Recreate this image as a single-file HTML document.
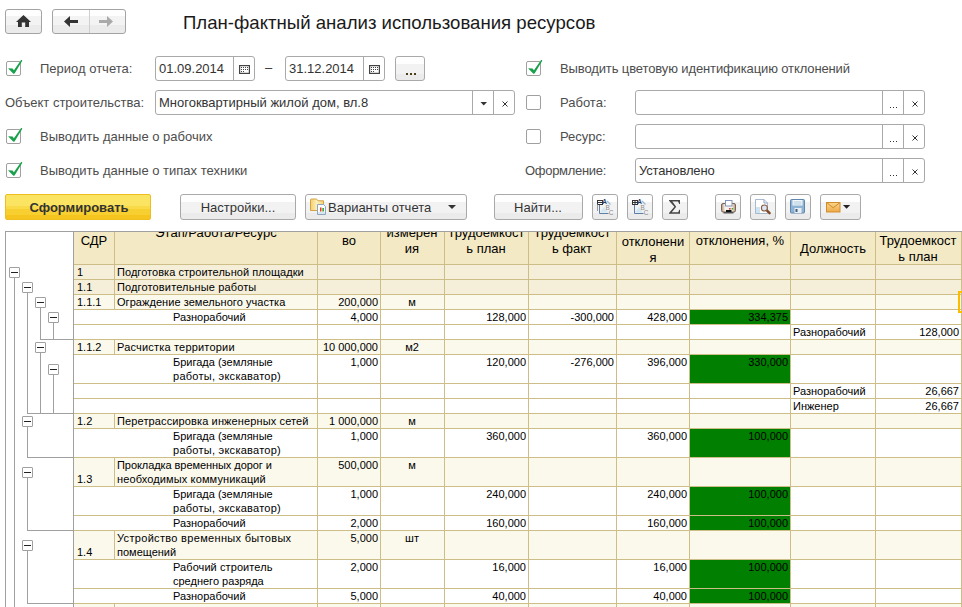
<!DOCTYPE html>
<html><head><meta charset="utf-8"><style>
html,body{margin:0;padding:0;}
body{width:962px;height:607px;overflow:hidden;position:relative;background:#fff;font-family:"Liberation Sans", sans-serif;}
.t{position:absolute;white-space:nowrap;font-family:"Liberation Sans", sans-serif;}
</style></head><body>
<div style="position:absolute;left:5px;top:9px;width:35px;height:23px;border:1px solid #a3a3a3;border-radius:3px;background:linear-gradient(#fefefe 0,#fefefe 27%,#f3f3f3 27%,#f3f3f3 64%,#ebebeb 64%,#ebebeb 100%);"></div><svg style="position:absolute;left:0;top:0" width="962" height="40"><path d="M23.5 15 L31 22 L29 22 L29 27 L25.2 27 L25.2 22.5 L21.8 22.5 L21.8 27 L18 27 L18 22 L16 22 Z" fill="#333"/></svg><div style="position:absolute;left:52px;top:9px;width:72px;height:23px;border:1px solid #a3a3a3;border-radius:3px;background:linear-gradient(#fefefe 0,#fefefe 27%,#f3f3f3 27%,#f3f3f3 64%,#ebebeb 64%,#ebebeb 100%);"></div><div style="position:absolute;left:89px;top:10px;width:1px;height:23px;background:#cfcfcf;"></div><svg style="position:absolute;left:0;top:0" width="962" height="40"><path d="M64 21.5 L70 16 L70 20 L78 20 L78 23 L70 23 L70 27 Z" fill="#333"/><path d="M113 21.5 L107 16 L107 20 L99 20 L99 23 L107 23 L107 27 Z" fill="#aaa"/></svg><div class="t" style="left:183px;top:14.26px;font-size:18.6px;line-height:18.6px;color:#1a1a1a;font-weight:normal;">План-фактный анализ использования ресурсов</div><div style="position:absolute;left:6px;top:61px;width:13px;height:13px;border:1px solid #a0a0a0;border-radius:2px;background:#fff;"></div><svg style="position:absolute;left:7px;top:59px" width="18" height="18"><path d="M1.3 9.2 L5.6 9.4 L6.9 11.2 L14.1 1.0 L14.8 0.9 L15.3 1.7 L7.6 14.5 L6.4 14.8 L1.7 10.1 Z" fill="#19a04b"/></svg><div class="t" style="left:40px;top:62.0px;font-size:13px;line-height:13px;color:#4d4d4d;font-weight:normal;">Период отчета:</div><div style="position:absolute;left:526px;top:61px;width:13px;height:13px;border:1px solid #a0a0a0;border-radius:2px;background:#fff;"></div><svg style="position:absolute;left:527px;top:59px" width="18" height="18"><path d="M1.3 9.2 L5.6 9.4 L6.9 11.2 L14.1 1.0 L14.8 0.9 L15.3 1.7 L7.6 14.5 L6.4 14.8 L1.7 10.1 Z" fill="#19a04b"/></svg><div class="t" style="left:560px;top:62.0px;font-size:13px;line-height:13px;color:#4d4d4d;font-weight:normal;letter-spacing:-0.12px;">Выводить цветовую идентификацию отклонений</div><div class="t" style="left:5px;top:96.0px;font-size:13px;line-height:13px;color:#4d4d4d;font-weight:normal;">Объект строительства:</div><div style="position:absolute;left:526px;top:95px;width:13px;height:13px;border:1px solid #a0a0a0;border-radius:2px;background:#fff;"></div><div class="t" style="left:560px;top:96.0px;font-size:13px;line-height:13px;color:#4d4d4d;font-weight:normal;">Работа:</div><div style="position:absolute;left:6px;top:129px;width:13px;height:13px;border:1px solid #a0a0a0;border-radius:2px;background:#fff;"></div><svg style="position:absolute;left:7px;top:127px" width="18" height="18"><path d="M1.3 9.2 L5.6 9.4 L6.9 11.2 L14.1 1.0 L14.8 0.9 L15.3 1.7 L7.6 14.5 L6.4 14.8 L1.7 10.1 Z" fill="#19a04b"/></svg><div class="t" style="left:40px;top:130.0px;font-size:13px;line-height:13px;color:#4d4d4d;font-weight:normal;">Выводить данные о рабочих</div><div style="position:absolute;left:526px;top:129px;width:13px;height:13px;border:1px solid #a0a0a0;border-radius:2px;background:#fff;"></div><div class="t" style="left:560px;top:130.0px;font-size:13px;line-height:13px;color:#4d4d4d;font-weight:normal;">Ресурс:</div><div style="position:absolute;left:6px;top:163px;width:13px;height:13px;border:1px solid #a0a0a0;border-radius:2px;background:#fff;"></div><svg style="position:absolute;left:7px;top:161px" width="18" height="18"><path d="M1.3 9.2 L5.6 9.4 L6.9 11.2 L14.1 1.0 L14.8 0.9 L15.3 1.7 L7.6 14.5 L6.4 14.8 L1.7 10.1 Z" fill="#19a04b"/></svg><div class="t" style="left:40px;top:164.0px;font-size:13px;line-height:13px;color:#4d4d4d;font-weight:normal;">Выводить данные о типах техники</div><div class="t" style="left:525px;top:164.0px;font-size:13px;line-height:13px;color:#4d4d4d;font-weight:normal;letter-spacing:-0.3px;">Оформление:</div><div style="position:absolute;left:155px;top:56px;width:100px;height:25px;border:1px solid #a9a9a9;border-radius:3px;background:#fff;box-sizing:border-box;"></div><div style="position:absolute;left:233px;top:57px;width:1px;height:23px;background:#a9a9a9;"></div><svg style="position:absolute;left:239px;top:65px" width="12" height="10"><rect x="0.6" y="0.6" width="9.8" height="7.8" fill="#fff" stroke="#444" stroke-width="1.2"/><rect x="2" y="2" width="1" height="1" fill="#444"/><rect x="2" y="4" width="1" height="1" fill="#444"/><rect x="2" y="6" width="1" height="1" fill="#444"/><rect x="4" y="2" width="1" height="1" fill="#444"/><rect x="4" y="4" width="1" height="1" fill="#444"/><rect x="4" y="6" width="1" height="1" fill="#444"/><rect x="6" y="2" width="1" height="1" fill="#444"/><rect x="6" y="4" width="1" height="1" fill="#444"/><rect x="8" y="2" width="1" height="1" fill="#444"/><rect x="8" y="4" width="1" height="1" fill="#444"/></svg><div class="t" style="left:159px;top:62.0px;font-size:13px;line-height:13px;color:#333;font-weight:normal;">01.09.2014</div><div class="t" style="left:265px;top:61.0px;font-size:13px;line-height:13px;color:#333;font-weight:normal;">–</div><div style="position:absolute;left:285px;top:56px;width:100px;height:25px;border:1px solid #a9a9a9;border-radius:3px;background:#fff;box-sizing:border-box;"></div><div style="position:absolute;left:363px;top:57px;width:1px;height:23px;background:#a9a9a9;"></div><svg style="position:absolute;left:369px;top:65px" width="12" height="10"><rect x="0.6" y="0.6" width="9.8" height="7.8" fill="#fff" stroke="#444" stroke-width="1.2"/><rect x="2" y="2" width="1" height="1" fill="#444"/><rect x="2" y="4" width="1" height="1" fill="#444"/><rect x="2" y="6" width="1" height="1" fill="#444"/><rect x="4" y="2" width="1" height="1" fill="#444"/><rect x="4" y="4" width="1" height="1" fill="#444"/><rect x="4" y="6" width="1" height="1" fill="#444"/><rect x="6" y="2" width="1" height="1" fill="#444"/><rect x="6" y="4" width="1" height="1" fill="#444"/><rect x="8" y="2" width="1" height="1" fill="#444"/><rect x="8" y="4" width="1" height="1" fill="#444"/></svg><div class="t" style="left:289px;top:62.0px;font-size:13px;line-height:13px;color:#333;font-weight:normal;">31.12.2014</div><div style="position:absolute;left:395px;top:56px;width:30px;height:25px;border:1px solid #a9a9a9;border-radius:3px;box-sizing:border-box;background:linear-gradient(#fefefe 0,#fefefe 30%,#f2f2f2 30%,#f2f2f2 75%,#ebebeb 75%,#ebebeb 100%);"></div><div style="position:absolute;left:406px;top:73px;width:2px;height:2px;background:#4a3c14;"></div><div style="position:absolute;left:410px;top:73px;width:2px;height:2px;background:#4a3c14;"></div><div style="position:absolute;left:414px;top:73px;width:2px;height:2px;background:#4a3c14;"></div><div style="position:absolute;left:155px;top:90px;width:360px;height:25px;border:1px solid #a9a9a9;border-radius:3px;background:#fff;box-sizing:border-box;"></div><div style="position:absolute;left:472px;top:91px;width:1px;height:23px;background:#a9a9a9;"></div><div style="position:absolute;left:493px;top:91px;width:1px;height:23px;background:#a9a9a9;"></div><svg style="position:absolute;left:480px;top:102px" width="8" height="4"><path d="M0.5 0 L7 0 L3.75 3.5 Z" fill="#333"/></svg><svg style="position:absolute;left:502px;top:101px" width="6" height="6"><path d="M0.5 0.5 L5.5 5.5 M5.5 0.5 L0.5 5.5" stroke="#333" stroke-width="1"/></svg><div class="t" style="left:159px;top:96.0px;font-size:13px;line-height:13px;color:#333;font-weight:normal;">Многоквартирный жилой дом, вл.8</div><div style="position:absolute;left:635px;top:90px;width:290px;height:25px;border:1px solid #a9a9a9;border-radius:3px;background:#fff;box-sizing:border-box;"></div><div style="position:absolute;left:882px;top:91px;width:1px;height:23px;background:#a9a9a9;"></div><div style="position:absolute;left:903px;top:91px;width:1px;height:23px;background:#a9a9a9;"></div><div style="position:absolute;left:890px;top:107px;width:1px;height:1px;background:#333;"></div><div style="position:absolute;left:893px;top:107px;width:1px;height:1px;background:#333;"></div><div style="position:absolute;left:896px;top:107px;width:1px;height:1px;background:#333;"></div><svg style="position:absolute;left:912px;top:101px" width="6" height="6"><path d="M0.5 0.5 L5.5 5.5 M5.5 0.5 L0.5 5.5" stroke="#333" stroke-width="1"/></svg><div style="position:absolute;left:635px;top:124px;width:290px;height:25px;border:1px solid #a9a9a9;border-radius:3px;background:#fff;box-sizing:border-box;"></div><div style="position:absolute;left:882px;top:125px;width:1px;height:23px;background:#a9a9a9;"></div><div style="position:absolute;left:903px;top:125px;width:1px;height:23px;background:#a9a9a9;"></div><div style="position:absolute;left:890px;top:141px;width:1px;height:1px;background:#333;"></div><div style="position:absolute;left:893px;top:141px;width:1px;height:1px;background:#333;"></div><div style="position:absolute;left:896px;top:141px;width:1px;height:1px;background:#333;"></div><svg style="position:absolute;left:912px;top:135px" width="6" height="6"><path d="M0.5 0.5 L5.5 5.5 M5.5 0.5 L0.5 5.5" stroke="#333" stroke-width="1"/></svg><div style="position:absolute;left:635px;top:158px;width:290px;height:25px;border:1px solid #a9a9a9;border-radius:3px;background:#fff;box-sizing:border-box;"></div><div style="position:absolute;left:882px;top:159px;width:1px;height:23px;background:#a9a9a9;"></div><div style="position:absolute;left:903px;top:159px;width:1px;height:23px;background:#a9a9a9;"></div><div style="position:absolute;left:890px;top:175px;width:1px;height:1px;background:#333;"></div><div style="position:absolute;left:893px;top:175px;width:1px;height:1px;background:#333;"></div><div style="position:absolute;left:896px;top:175px;width:1px;height:1px;background:#333;"></div><svg style="position:absolute;left:912px;top:169px" width="6" height="6"><path d="M0.5 0.5 L5.5 5.5 M5.5 0.5 L0.5 5.5" stroke="#333" stroke-width="1"/></svg><div class="t" style="left:639px;top:164.0px;font-size:13px;line-height:13px;color:#333;font-weight:normal;letter-spacing:-0.15px;">Установлено</div><div style="position:absolute;left:5px;top:194px;width:146px;height:26px;border:1px solid #eebd1e;border-radius:2px;box-sizing:border-box;background:linear-gradient(#fbe462 0,#fbe462 44%,#f9da48 44%,#f9da48 58%,#f8cf30 58%,#f8cf30 84%,#f5c41f 84%,#f5c41f 100%);"></div><div class="t" style="left:-221px;width:600px;text-align:center;top:201.0px;font-size:13px;line-height:13px;color:#333;font-weight:normal;"><b>Сформировать</b></div><div style="position:absolute;left:180px;top:194px;width:116px;height:26px;border:1px solid #a9a9a9;border-radius:3px;box-sizing:border-box;background:linear-gradient(#fefefe 0,#fefefe 30%,#f2f2f2 30%,#f2f2f2 75%,#ebebeb 75%,#ebebeb 100%);"></div><div class="t" style="left:-62px;width:600px;text-align:center;top:201.0px;font-size:13px;line-height:13px;color:#333;font-weight:normal;">Настройки...</div><div style="position:absolute;left:305px;top:194px;width:162px;height:26px;border:1px solid #a9a9a9;border-radius:3px;box-sizing:border-box;background:linear-gradient(#fefefe 0,#fefefe 30%,#f2f2f2 30%,#f2f2f2 75%,#ebebeb 75%,#ebebeb 100%);"></div><div class="t" style="left:328px;top:201.0px;font-size:13px;line-height:13px;color:#333;font-weight:normal;">Варианты отчета</div><svg style="position:absolute;left:448px;top:205px" width="9" height="5"><path d="M0 0 L8 0 L4 4 Z" fill="#333"/></svg><svg style="position:absolute;left:0;top:0" width="962" height="230"><defs><linearGradient id="fg" x1="0" y1="0" x2="1" y2="0"><stop offset="0" stop-color="#f3cf6e"/><stop offset="0.5" stop-color="#fdf0bd"/><stop offset="1" stop-color="#f3d27a"/></linearGradient></defs><path d="M310.5 210.5 L310.5 199.8 Q310.5 199 311.3 199 L316.5 199 L318 200.8 L323.5 200.8 L323.5 210.5 Z" fill="url(#fg)" stroke="#d2a444"/><path d="M317.5 204.5 L323.5 204.5 L325.5 206.5 L325.5 214.5 L317.5 214.5 Z" fill="#fbfcfd" stroke="#8ea6bd"/><rect x="318" y="212" width="7" height="2" fill="#d6e8f4"/><rect x="320" y="207.5" width="1.5" height="4" fill="#ef3b2a"/><rect x="322.3" y="208" width="1.7" height="3.5" fill="#3aae3a"/></svg><div style="position:absolute;left:494px;top:194px;width:89px;height:26px;border:1px solid #a9a9a9;border-radius:3px;box-sizing:border-box;background:linear-gradient(#fefefe 0,#fefefe 30%,#f2f2f2 30%,#f2f2f2 75%,#ebebeb 75%,#ebebeb 100%);"></div><div class="t" style="left:238px;width:600px;text-align:center;top:201.0px;font-size:13px;line-height:13px;color:#333;font-weight:normal;">Найти...</div><div style="position:absolute;left:592px;top:194px;width:26px;height:26px;border:1px solid #a9a9a9;border-radius:3px;box-sizing:border-box;background:linear-gradient(#fefefe 0,#fefefe 30%,#f2f2f2 30%,#f2f2f2 75%,#ebebeb 75%,#ebebeb 100%);"></div><div style="position:absolute;left:627px;top:194px;width:26px;height:26px;border:1px solid #a9a9a9;border-radius:3px;box-sizing:border-box;background:linear-gradient(#fefefe 0,#fefefe 30%,#f2f2f2 30%,#f2f2f2 75%,#ebebeb 75%,#ebebeb 100%);"></div><div style="position:absolute;left:662px;top:194px;width:26px;height:26px;border:1px solid #a9a9a9;border-radius:3px;box-sizing:border-box;background:linear-gradient(#fefefe 0,#fefefe 30%,#f2f2f2 30%,#f2f2f2 75%,#ebebeb 75%,#ebebeb 100%);"></div><svg style="position:absolute;left:0;top:0" width="962" height="230"><path d="M600 212.5 L608 212.5 L604 207 Z" fill="#d3e6f4"/><path d="M599.5 204.5 V213.5 H608.5" fill="none" stroke="#5f80a6"/><path d="M607 201 L610.5 204.5" stroke="#9fb8d0" stroke-width="1.2"/><rect x="597.5" y="200.5" width="5" height="4" fill="#fff" stroke="#333"/><path d="M597.5 202.5 H602.5" stroke="#333"/><path d="M597.5 204.5 V211" stroke="#999"/><text x="602.3" y="204" font-size="6.4" font-weight="bold" font-family="Liberation Sans" fill="#1f4168">A</text><text x="605.6" y="210" font-size="6.4" font-family="Liberation Sans" fill="#8a8a8a">B</text><text x="608.8" y="214.8" font-size="6.4" font-family="Liberation Sans" fill="#8a8a8a">C</text><path d="M635 212.5 L643 212.5 L639 207 Z" fill="#d3e6f4"/><path d="M634.5 204.5 V213.5 H643.5" fill="none" stroke="#5f80a6"/><path d="M642 201 L645.5 204.5" stroke="#9fb8d0" stroke-width="1.2"/><rect x="632.5" y="200.5" width="5" height="4" fill="#fff" stroke="#333"/><path d="M635 200.5 V204.5 M632.5 202.5 H637.5" stroke="#333"/><text x="637.3" y="204" font-size="6.4" font-weight="bold" font-family="Liberation Sans" fill="#1f4168">A</text><text x="640.6" y="210" font-size="6.4" font-family="Liberation Sans" fill="#8a8a8a">B</text><text x="643.8" y="214.8" font-size="6.4" font-family="Liberation Sans" fill="#8a8a8a">C</text><path d="M669 199.9 L680 199.9 L680 204 L679.3 204 L678 201.6 L672.3 201.6 L676.2 206.8 L671.8 212.2 L678.2 212.2 L679.3 209.8 L680 209.8 L680 213.8 L669 213.8 L669 212.9 L674.4 206.8 L669 200.8 Z" fill="#444"/></svg><div style="position:absolute;left:715px;top:194px;width:26px;height:26px;border:1px solid #a9a9a9;border-radius:3px;box-sizing:border-box;background:linear-gradient(#fefefe 0,#fefefe 30%,#f2f2f2 30%,#f2f2f2 75%,#ebebeb 75%,#ebebeb 100%);"></div><div style="position:absolute;left:750px;top:194px;width:26px;height:26px;border:1px solid #a9a9a9;border-radius:3px;box-sizing:border-box;background:linear-gradient(#fefefe 0,#fefefe 30%,#f2f2f2 30%,#f2f2f2 75%,#ebebeb 75%,#ebebeb 100%);"></div><div style="position:absolute;left:785px;top:194px;width:26px;height:26px;border:1px solid #a9a9a9;border-radius:3px;box-sizing:border-box;background:linear-gradient(#fefefe 0,#fefefe 30%,#f2f2f2 30%,#f2f2f2 75%,#ebebeb 75%,#ebebeb 100%);"></div><div style="position:absolute;left:820px;top:194px;width:41px;height:26px;border:1px solid #a9a9a9;border-radius:3px;box-sizing:border-box;background:linear-gradient(#fefefe 0,#fefefe 30%,#f2f2f2 30%,#f2f2f2 75%,#ebebeb 75%,#ebebeb 100%);"></div><svg style="position:absolute;left:0;top:0" width="962" height="230"><defs><linearGradient id="pg" x1="0" y1="0" x2="1" y2="0"><stop offset="0" stop-color="#b88c6c"/><stop offset="0.25" stop-color="#f7f3ee"/><stop offset="0.75" stop-color="#f7f3ee"/><stop offset="1" stop-color="#b88c6c"/></linearGradient><linearGradient id="mg" x1="0" y1="0" x2="0" y2="1"><stop offset="0" stop-color="#f9d68a"/><stop offset="1" stop-color="#eea94a"/></linearGradient></defs><rect x="721.5" y="203.5" width="14" height="8.5" rx="1.5" fill="url(#pg)" stroke="#77675a"/><rect x="725.5" y="200.5" width="6.5" height="5.5" fill="#fff" stroke="#8193b8"/><rect x="729" y="208" width="1.6" height="1.6" fill="#e8322a"/><rect x="731.6" y="208" width="1.6" height="1.6" fill="#3cad3c"/><rect x="726" y="210" width="5.5" height="2" fill="#111"/><rect x="723.5" y="212" width="10" height="1.5" fill="#555"/><path d="M755.5 199.5 L764 199.5 L767.5 203 L767.5 213.5 L755.5 213.5 Z" fill="#fff" stroke="#9fb1c9" stroke-width="0.9"/><path d="M764 199.5 L764 203 L767.5 203" fill="none" stroke="#8fa3c0"/><rect x="756" y="207" width="4" height="6" fill="#cfe4f3"/><path d="M766.6 210.2 L769.6 213.2" stroke="#7a4a2a" stroke-width="2.4" stroke-linecap="round"/><circle cx="764.4" cy="208" r="3" fill="#d8e8f5" stroke="#8b5a3c" stroke-width="1.1"/><rect x="790.5" y="199.5" width="14" height="13.5" rx="1" fill="#8fb3d3" stroke="#5f87ad"/><rect x="792.5" y="200" width="10" height="5.5" fill="#f4f8fb"/><rect x="793.5" y="201.6" width="8" height="0.8" fill="#9bbcd6"/><rect x="793.5" y="203.6" width="8" height="0.8" fill="#9bbcd6"/><rect x="794.5" y="208" width="7" height="5" fill="#e9eef2"/><rect x="795.5" y="209" width="2" height="3" fill="#3e5f86"/><rect x="826.5" y="202.5" width="13.5" height="9.5" fill="url(#mg)" stroke="#d08d2c"/><path d="M826.5 202.5 L833.25 207.8 L840 202.5" fill="none" stroke="#d08d2c"/><path d="M843 205 L850.2 205 L846.6 208.8 Z" fill="#222"/></svg><div style="position:absolute;left:5px;top:231px;width:957px;height:1px;background:#a0a0a0;"></div><div style="position:absolute;left:5px;top:231px;width:1px;height:376px;background:#a0a0a0;"></div><div style="position:absolute;left:73px;top:231px;width:1px;height:376px;background:#a0a0a0;"></div><div style="position:absolute;left:74px;top:232px;width:888px;height:32px;background:#f3e9c4;"></div><div style="position:absolute;left:74px;top:265px;width:888px;height:14px;background:#f5eed9;"></div><div style="position:absolute;left:74px;top:264px;width:888px;height:1px;background:#cdbd86;"></div><div style="position:absolute;left:114px;top:264px;width:1px;height:15px;background:#cdbd86;"></div><div style="position:absolute;left:317px;top:264px;width:1px;height:15px;background:#cdbd86;"></div><div style="position:absolute;left:380px;top:264px;width:1px;height:15px;background:#cdbd86;"></div><div style="position:absolute;left:444px;top:264px;width:1px;height:15px;background:#cdbd86;"></div><div style="position:absolute;left:528px;top:264px;width:1px;height:15px;background:#cdbd86;"></div><div style="position:absolute;left:616px;top:264px;width:1px;height:15px;background:#cdbd86;"></div><div style="position:absolute;left:689px;top:264px;width:1px;height:15px;background:#cdbd86;"></div><div style="position:absolute;left:790px;top:264px;width:1px;height:15px;background:#cdbd86;"></div><div style="position:absolute;left:875px;top:264px;width:1px;height:15px;background:#cdbd86;"></div><div style="position:absolute;left:961px;top:264px;width:1px;height:15px;background:#cdbd86;"></div><div class="t" style="left:77px;top:266.69px;font-size:11px;line-height:11px;color:#000;font-weight:normal;">1</div><div class="t" style="left:117px;top:266.69px;font-size:11px;line-height:11px;color:#000;font-weight:normal;letter-spacing:0.047px;">Подготовка строительной площадки</div><div style="position:absolute;left:74px;top:280px;width:888px;height:14px;background:#f5eed9;"></div><div style="position:absolute;left:74px;top:279px;width:888px;height:1px;background:#cdbd86;"></div><div style="position:absolute;left:114px;top:279px;width:1px;height:15px;background:#cdbd86;"></div><div style="position:absolute;left:317px;top:279px;width:1px;height:15px;background:#cdbd86;"></div><div style="position:absolute;left:380px;top:279px;width:1px;height:15px;background:#cdbd86;"></div><div style="position:absolute;left:444px;top:279px;width:1px;height:15px;background:#cdbd86;"></div><div style="position:absolute;left:528px;top:279px;width:1px;height:15px;background:#cdbd86;"></div><div style="position:absolute;left:616px;top:279px;width:1px;height:15px;background:#cdbd86;"></div><div style="position:absolute;left:689px;top:279px;width:1px;height:15px;background:#cdbd86;"></div><div style="position:absolute;left:790px;top:279px;width:1px;height:15px;background:#cdbd86;"></div><div style="position:absolute;left:875px;top:279px;width:1px;height:15px;background:#cdbd86;"></div><div style="position:absolute;left:961px;top:279px;width:1px;height:15px;background:#cdbd86;"></div><div class="t" style="left:77px;top:281.69px;font-size:11px;line-height:11px;color:#000;font-weight:normal;">1.1</div><div class="t" style="left:117px;top:281.69px;font-size:11px;line-height:11px;color:#000;font-weight:normal;letter-spacing:0.14px;">Подготовительные работы</div><div style="position:absolute;left:74px;top:295px;width:888px;height:14px;background:#fbf8ec;"></div><div style="position:absolute;left:74px;top:294px;width:888px;height:1px;background:#cdbd86;"></div><div style="position:absolute;left:114px;top:294px;width:1px;height:15px;background:#cdbd86;"></div><div style="position:absolute;left:317px;top:294px;width:1px;height:15px;background:#cdbd86;"></div><div style="position:absolute;left:380px;top:294px;width:1px;height:15px;background:#cdbd86;"></div><div style="position:absolute;left:444px;top:294px;width:1px;height:15px;background:#cdbd86;"></div><div style="position:absolute;left:528px;top:294px;width:1px;height:15px;background:#cdbd86;"></div><div style="position:absolute;left:616px;top:294px;width:1px;height:15px;background:#cdbd86;"></div><div style="position:absolute;left:689px;top:294px;width:1px;height:15px;background:#cdbd86;"></div><div style="position:absolute;left:790px;top:294px;width:1px;height:15px;background:#cdbd86;"></div><div style="position:absolute;left:875px;top:294px;width:1px;height:15px;background:#cdbd86;"></div><div style="position:absolute;left:961px;top:294px;width:1px;height:15px;background:#cdbd86;"></div><div class="t" style="left:77px;top:296.69px;font-size:11px;line-height:11px;color:#000;font-weight:normal;">1.1.1</div><div class="t" style="left:117px;top:296.69px;font-size:11px;line-height:11px;color:#000;font-weight:normal;letter-spacing:0.055px;">Ограждение земельного участка</div><div class="t" style="right:584px;top:296.69px;font-size:11px;line-height:11px;color:#000;font-weight:normal;">200,000</div><div class="t" style="left:112px;width:600px;text-align:center;top:296.69px;font-size:11px;line-height:11px;color:#000;font-weight:normal;">м</div><div style="position:absolute;left:74px;top:310px;width:888px;height:14px;background:#fff;"></div><div style="position:absolute;left:74px;top:309px;width:888px;height:1px;background:#cdbd86;"></div><div style="position:absolute;left:690px;top:310px;width:100px;height:14px;background:#007f00;"></div><div style="position:absolute;left:317px;top:309px;width:1px;height:15px;background:#cdbd86;"></div><div style="position:absolute;left:380px;top:309px;width:1px;height:15px;background:#cdbd86;"></div><div style="position:absolute;left:444px;top:309px;width:1px;height:15px;background:#cdbd86;"></div><div style="position:absolute;left:528px;top:309px;width:1px;height:15px;background:#cdbd86;"></div><div style="position:absolute;left:616px;top:309px;width:1px;height:15px;background:#cdbd86;"></div><div style="position:absolute;left:689px;top:309px;width:1px;height:15px;background:#cdbd86;"></div><div style="position:absolute;left:790px;top:309px;width:1px;height:15px;background:#cdbd86;"></div><div style="position:absolute;left:875px;top:309px;width:1px;height:15px;background:#cdbd86;"></div><div style="position:absolute;left:961px;top:309px;width:1px;height:15px;background:#cdbd86;"></div><div class="t" style="left:173px;top:311.69px;font-size:11px;line-height:11px;color:#000;font-weight:normal;">Разнорабочий</div><div class="t" style="right:584px;top:311.69px;font-size:11px;line-height:11px;color:#000;font-weight:normal;">4,000</div><div class="t" style="right:436px;top:311.69px;font-size:11px;line-height:11px;color:#000;font-weight:normal;">128,000</div><div class="t" style="right:348px;top:311.69px;font-size:11px;line-height:11px;color:#000;font-weight:normal;">-300,000</div><div class="t" style="right:275px;top:311.69px;font-size:11px;line-height:11px;color:#000;font-weight:normal;">428,000</div><div class="t" style="right:174px;top:311.69px;font-size:11px;line-height:11px;color:#000;font-weight:normal;">334,375</div><div style="position:absolute;left:74px;top:325px;width:888px;height:14px;background:#fff;"></div><div style="position:absolute;left:74px;top:324px;width:888px;height:1px;background:#cdbd86;"></div><div style="position:absolute;left:317px;top:324px;width:1px;height:15px;background:#cdbd86;"></div><div style="position:absolute;left:380px;top:324px;width:1px;height:15px;background:#cdbd86;"></div><div style="position:absolute;left:444px;top:324px;width:1px;height:15px;background:#cdbd86;"></div><div style="position:absolute;left:528px;top:324px;width:1px;height:15px;background:#cdbd86;"></div><div style="position:absolute;left:616px;top:324px;width:1px;height:15px;background:#cdbd86;"></div><div style="position:absolute;left:689px;top:324px;width:1px;height:15px;background:#cdbd86;"></div><div style="position:absolute;left:790px;top:324px;width:1px;height:15px;background:#cdbd86;"></div><div style="position:absolute;left:875px;top:324px;width:1px;height:15px;background:#cdbd86;"></div><div style="position:absolute;left:961px;top:324px;width:1px;height:15px;background:#cdbd86;"></div><div class="t" style="left:793px;top:326.69px;font-size:11px;line-height:11px;color:#000;font-weight:normal;">Разнорабочий</div><div class="t" style="right:3px;top:326.69px;font-size:11px;line-height:11px;color:#000;font-weight:normal;">128,000</div><div style="position:absolute;left:74px;top:340px;width:888px;height:14px;background:#fbf8ec;"></div><div style="position:absolute;left:74px;top:339px;width:888px;height:1px;background:#cdbd86;"></div><div style="position:absolute;left:114px;top:339px;width:1px;height:15px;background:#cdbd86;"></div><div style="position:absolute;left:317px;top:339px;width:1px;height:15px;background:#cdbd86;"></div><div style="position:absolute;left:380px;top:339px;width:1px;height:15px;background:#cdbd86;"></div><div style="position:absolute;left:444px;top:339px;width:1px;height:15px;background:#cdbd86;"></div><div style="position:absolute;left:528px;top:339px;width:1px;height:15px;background:#cdbd86;"></div><div style="position:absolute;left:616px;top:339px;width:1px;height:15px;background:#cdbd86;"></div><div style="position:absolute;left:689px;top:339px;width:1px;height:15px;background:#cdbd86;"></div><div style="position:absolute;left:790px;top:339px;width:1px;height:15px;background:#cdbd86;"></div><div style="position:absolute;left:875px;top:339px;width:1px;height:15px;background:#cdbd86;"></div><div style="position:absolute;left:961px;top:339px;width:1px;height:15px;background:#cdbd86;"></div><div class="t" style="left:77px;top:341.69px;font-size:11px;line-height:11px;color:#000;font-weight:normal;">1.1.2</div><div class="t" style="left:117px;top:341.69px;font-size:11px;line-height:11px;color:#000;font-weight:normal;letter-spacing:0.19px;">Расчистка территории</div><div class="t" style="right:584px;top:341.69px;font-size:11px;line-height:11px;color:#000;font-weight:normal;">10 000,000</div><div class="t" style="left:112px;width:600px;text-align:center;top:341.69px;font-size:11px;line-height:11px;color:#000;font-weight:normal;">м2</div><div style="position:absolute;left:74px;top:355px;width:888px;height:28px;background:#fff;"></div><div style="position:absolute;left:74px;top:354px;width:888px;height:1px;background:#cdbd86;"></div><div style="position:absolute;left:690px;top:355px;width:100px;height:28px;background:#007f00;"></div><div style="position:absolute;left:317px;top:354px;width:1px;height:29px;background:#cdbd86;"></div><div style="position:absolute;left:380px;top:354px;width:1px;height:29px;background:#cdbd86;"></div><div style="position:absolute;left:444px;top:354px;width:1px;height:29px;background:#cdbd86;"></div><div style="position:absolute;left:528px;top:354px;width:1px;height:29px;background:#cdbd86;"></div><div style="position:absolute;left:616px;top:354px;width:1px;height:29px;background:#cdbd86;"></div><div style="position:absolute;left:689px;top:354px;width:1px;height:29px;background:#cdbd86;"></div><div style="position:absolute;left:790px;top:354px;width:1px;height:29px;background:#cdbd86;"></div><div style="position:absolute;left:875px;top:354px;width:1px;height:29px;background:#cdbd86;"></div><div style="position:absolute;left:961px;top:354px;width:1px;height:29px;background:#cdbd86;"></div><div class="t" style="left:173px;top:356.69px;font-size:11px;line-height:11px;color:#000;font-weight:normal;">Бригада (земляные</div><div class="t" style="left:173px;top:370.69px;font-size:11px;line-height:11px;color:#000;font-weight:normal;letter-spacing:0.26px;">работы, экскаватор)</div><div class="t" style="right:584px;top:356.69px;font-size:11px;line-height:11px;color:#000;font-weight:normal;">1,000</div><div class="t" style="right:436px;top:356.69px;font-size:11px;line-height:11px;color:#000;font-weight:normal;">120,000</div><div class="t" style="right:348px;top:356.69px;font-size:11px;line-height:11px;color:#000;font-weight:normal;">-276,000</div><div class="t" style="right:275px;top:356.69px;font-size:11px;line-height:11px;color:#000;font-weight:normal;">396,000</div><div class="t" style="right:174px;top:356.69px;font-size:11px;line-height:11px;color:#000;font-weight:normal;">330,000</div><div style="position:absolute;left:74px;top:384px;width:888px;height:14px;background:#fff;"></div><div style="position:absolute;left:74px;top:383px;width:888px;height:1px;background:#cdbd86;"></div><div style="position:absolute;left:317px;top:383px;width:1px;height:15px;background:#cdbd86;"></div><div style="position:absolute;left:380px;top:383px;width:1px;height:15px;background:#cdbd86;"></div><div style="position:absolute;left:444px;top:383px;width:1px;height:15px;background:#cdbd86;"></div><div style="position:absolute;left:528px;top:383px;width:1px;height:15px;background:#cdbd86;"></div><div style="position:absolute;left:616px;top:383px;width:1px;height:15px;background:#cdbd86;"></div><div style="position:absolute;left:689px;top:383px;width:1px;height:15px;background:#cdbd86;"></div><div style="position:absolute;left:790px;top:383px;width:1px;height:15px;background:#cdbd86;"></div><div style="position:absolute;left:875px;top:383px;width:1px;height:15px;background:#cdbd86;"></div><div style="position:absolute;left:961px;top:383px;width:1px;height:15px;background:#cdbd86;"></div><div class="t" style="left:793px;top:385.69px;font-size:11px;line-height:11px;color:#000;font-weight:normal;">Разнорабочий</div><div class="t" style="right:3px;top:385.69px;font-size:11px;line-height:11px;color:#000;font-weight:normal;">26,667</div><div style="position:absolute;left:74px;top:399px;width:888px;height:14px;background:#fff;"></div><div style="position:absolute;left:74px;top:398px;width:888px;height:1px;background:#cdbd86;"></div><div style="position:absolute;left:317px;top:398px;width:1px;height:15px;background:#cdbd86;"></div><div style="position:absolute;left:380px;top:398px;width:1px;height:15px;background:#cdbd86;"></div><div style="position:absolute;left:444px;top:398px;width:1px;height:15px;background:#cdbd86;"></div><div style="position:absolute;left:528px;top:398px;width:1px;height:15px;background:#cdbd86;"></div><div style="position:absolute;left:616px;top:398px;width:1px;height:15px;background:#cdbd86;"></div><div style="position:absolute;left:689px;top:398px;width:1px;height:15px;background:#cdbd86;"></div><div style="position:absolute;left:790px;top:398px;width:1px;height:15px;background:#cdbd86;"></div><div style="position:absolute;left:875px;top:398px;width:1px;height:15px;background:#cdbd86;"></div><div style="position:absolute;left:961px;top:398px;width:1px;height:15px;background:#cdbd86;"></div><div class="t" style="left:793px;top:400.69px;font-size:11px;line-height:11px;color:#000;font-weight:normal;">Инженер</div><div class="t" style="right:3px;top:400.69px;font-size:11px;line-height:11px;color:#000;font-weight:normal;">26,667</div><div style="position:absolute;left:74px;top:414px;width:888px;height:14px;background:#fbf8ec;"></div><div style="position:absolute;left:74px;top:413px;width:888px;height:1px;background:#cdbd86;"></div><div style="position:absolute;left:114px;top:413px;width:1px;height:15px;background:#cdbd86;"></div><div style="position:absolute;left:317px;top:413px;width:1px;height:15px;background:#cdbd86;"></div><div style="position:absolute;left:380px;top:413px;width:1px;height:15px;background:#cdbd86;"></div><div style="position:absolute;left:444px;top:413px;width:1px;height:15px;background:#cdbd86;"></div><div style="position:absolute;left:528px;top:413px;width:1px;height:15px;background:#cdbd86;"></div><div style="position:absolute;left:616px;top:413px;width:1px;height:15px;background:#cdbd86;"></div><div style="position:absolute;left:689px;top:413px;width:1px;height:15px;background:#cdbd86;"></div><div style="position:absolute;left:790px;top:413px;width:1px;height:15px;background:#cdbd86;"></div><div style="position:absolute;left:875px;top:413px;width:1px;height:15px;background:#cdbd86;"></div><div style="position:absolute;left:961px;top:413px;width:1px;height:15px;background:#cdbd86;"></div><div class="t" style="left:77px;top:415.69px;font-size:11px;line-height:11px;color:#000;font-weight:normal;">1.2</div><div class="t" style="left:117px;top:415.69px;font-size:11px;line-height:11px;color:#000;font-weight:normal;letter-spacing:0.125px;">Перетрассировка инженерных сетей</div><div class="t" style="right:584px;top:415.69px;font-size:11px;line-height:11px;color:#000;font-weight:normal;">1 000,000</div><div class="t" style="left:112px;width:600px;text-align:center;top:415.69px;font-size:11px;line-height:11px;color:#000;font-weight:normal;">м</div><div style="position:absolute;left:74px;top:429px;width:888px;height:28px;background:#fff;"></div><div style="position:absolute;left:74px;top:428px;width:888px;height:1px;background:#cdbd86;"></div><div style="position:absolute;left:690px;top:429px;width:100px;height:28px;background:#007f00;"></div><div style="position:absolute;left:317px;top:428px;width:1px;height:29px;background:#cdbd86;"></div><div style="position:absolute;left:380px;top:428px;width:1px;height:29px;background:#cdbd86;"></div><div style="position:absolute;left:444px;top:428px;width:1px;height:29px;background:#cdbd86;"></div><div style="position:absolute;left:528px;top:428px;width:1px;height:29px;background:#cdbd86;"></div><div style="position:absolute;left:616px;top:428px;width:1px;height:29px;background:#cdbd86;"></div><div style="position:absolute;left:689px;top:428px;width:1px;height:29px;background:#cdbd86;"></div><div style="position:absolute;left:790px;top:428px;width:1px;height:29px;background:#cdbd86;"></div><div style="position:absolute;left:875px;top:428px;width:1px;height:29px;background:#cdbd86;"></div><div style="position:absolute;left:961px;top:428px;width:1px;height:29px;background:#cdbd86;"></div><div class="t" style="left:173px;top:430.69px;font-size:11px;line-height:11px;color:#000;font-weight:normal;">Бригада (земляные</div><div class="t" style="left:173px;top:444.69px;font-size:11px;line-height:11px;color:#000;font-weight:normal;letter-spacing:0.26px;">работы, экскаватор)</div><div class="t" style="right:584px;top:430.69px;font-size:11px;line-height:11px;color:#000;font-weight:normal;">1,000</div><div class="t" style="right:436px;top:430.69px;font-size:11px;line-height:11px;color:#000;font-weight:normal;">360,000</div><div class="t" style="right:275px;top:430.69px;font-size:11px;line-height:11px;color:#000;font-weight:normal;">360,000</div><div class="t" style="right:174px;top:430.69px;font-size:11px;line-height:11px;color:#000;font-weight:normal;">100,000</div><div style="position:absolute;left:74px;top:458px;width:888px;height:28px;background:#fbf8ec;"></div><div style="position:absolute;left:74px;top:457px;width:888px;height:1px;background:#cdbd86;"></div><div style="position:absolute;left:114px;top:457px;width:1px;height:29px;background:#cdbd86;"></div><div style="position:absolute;left:317px;top:457px;width:1px;height:29px;background:#cdbd86;"></div><div style="position:absolute;left:380px;top:457px;width:1px;height:29px;background:#cdbd86;"></div><div style="position:absolute;left:444px;top:457px;width:1px;height:29px;background:#cdbd86;"></div><div style="position:absolute;left:528px;top:457px;width:1px;height:29px;background:#cdbd86;"></div><div style="position:absolute;left:616px;top:457px;width:1px;height:29px;background:#cdbd86;"></div><div style="position:absolute;left:689px;top:457px;width:1px;height:29px;background:#cdbd86;"></div><div style="position:absolute;left:790px;top:457px;width:1px;height:29px;background:#cdbd86;"></div><div style="position:absolute;left:875px;top:457px;width:1px;height:29px;background:#cdbd86;"></div><div style="position:absolute;left:961px;top:457px;width:1px;height:29px;background:#cdbd86;"></div><div class="t" style="left:77px;top:473.69px;font-size:11px;line-height:11px;color:#000;font-weight:normal;">1.3</div><div class="t" style="left:117px;top:459.69px;font-size:11px;line-height:11px;color:#000;font-weight:normal;letter-spacing:-0.067px;">Прокладка временных дорог и</div><div class="t" style="left:117px;top:473.69px;font-size:11px;line-height:11px;color:#000;font-weight:normal;letter-spacing:0.125px;">необходимых коммуникаций</div><div class="t" style="right:584px;top:459.69px;font-size:11px;line-height:11px;color:#000;font-weight:normal;">500,000</div><div class="t" style="left:112px;width:600px;text-align:center;top:459.69px;font-size:11px;line-height:11px;color:#000;font-weight:normal;">м</div><div style="position:absolute;left:74px;top:487px;width:888px;height:28px;background:#fff;"></div><div style="position:absolute;left:74px;top:486px;width:888px;height:1px;background:#cdbd86;"></div><div style="position:absolute;left:690px;top:487px;width:100px;height:28px;background:#007f00;"></div><div style="position:absolute;left:317px;top:486px;width:1px;height:29px;background:#cdbd86;"></div><div style="position:absolute;left:380px;top:486px;width:1px;height:29px;background:#cdbd86;"></div><div style="position:absolute;left:444px;top:486px;width:1px;height:29px;background:#cdbd86;"></div><div style="position:absolute;left:528px;top:486px;width:1px;height:29px;background:#cdbd86;"></div><div style="position:absolute;left:616px;top:486px;width:1px;height:29px;background:#cdbd86;"></div><div style="position:absolute;left:689px;top:486px;width:1px;height:29px;background:#cdbd86;"></div><div style="position:absolute;left:790px;top:486px;width:1px;height:29px;background:#cdbd86;"></div><div style="position:absolute;left:875px;top:486px;width:1px;height:29px;background:#cdbd86;"></div><div style="position:absolute;left:961px;top:486px;width:1px;height:29px;background:#cdbd86;"></div><div class="t" style="left:173px;top:488.69px;font-size:11px;line-height:11px;color:#000;font-weight:normal;">Бригада (земляные</div><div class="t" style="left:173px;top:502.69px;font-size:11px;line-height:11px;color:#000;font-weight:normal;letter-spacing:0.26px;">работы, экскаватор)</div><div class="t" style="right:584px;top:488.69px;font-size:11px;line-height:11px;color:#000;font-weight:normal;">1,000</div><div class="t" style="right:436px;top:488.69px;font-size:11px;line-height:11px;color:#000;font-weight:normal;">240,000</div><div class="t" style="right:275px;top:488.69px;font-size:11px;line-height:11px;color:#000;font-weight:normal;">240,000</div><div class="t" style="right:174px;top:488.69px;font-size:11px;line-height:11px;color:#000;font-weight:normal;">100,000</div><div style="position:absolute;left:74px;top:516px;width:888px;height:14px;background:#fff;"></div><div style="position:absolute;left:74px;top:515px;width:888px;height:1px;background:#cdbd86;"></div><div style="position:absolute;left:690px;top:516px;width:100px;height:14px;background:#007f00;"></div><div style="position:absolute;left:317px;top:515px;width:1px;height:15px;background:#cdbd86;"></div><div style="position:absolute;left:380px;top:515px;width:1px;height:15px;background:#cdbd86;"></div><div style="position:absolute;left:444px;top:515px;width:1px;height:15px;background:#cdbd86;"></div><div style="position:absolute;left:528px;top:515px;width:1px;height:15px;background:#cdbd86;"></div><div style="position:absolute;left:616px;top:515px;width:1px;height:15px;background:#cdbd86;"></div><div style="position:absolute;left:689px;top:515px;width:1px;height:15px;background:#cdbd86;"></div><div style="position:absolute;left:790px;top:515px;width:1px;height:15px;background:#cdbd86;"></div><div style="position:absolute;left:875px;top:515px;width:1px;height:15px;background:#cdbd86;"></div><div style="position:absolute;left:961px;top:515px;width:1px;height:15px;background:#cdbd86;"></div><div class="t" style="left:173px;top:517.69px;font-size:11px;line-height:11px;color:#000;font-weight:normal;">Разнорабочий</div><div class="t" style="right:584px;top:517.69px;font-size:11px;line-height:11px;color:#000;font-weight:normal;">2,000</div><div class="t" style="right:436px;top:517.69px;font-size:11px;line-height:11px;color:#000;font-weight:normal;">160,000</div><div class="t" style="right:275px;top:517.69px;font-size:11px;line-height:11px;color:#000;font-weight:normal;">160,000</div><div class="t" style="right:174px;top:517.69px;font-size:11px;line-height:11px;color:#000;font-weight:normal;">100,000</div><div style="position:absolute;left:74px;top:531px;width:888px;height:28px;background:#fbf8ec;"></div><div style="position:absolute;left:74px;top:530px;width:888px;height:1px;background:#cdbd86;"></div><div style="position:absolute;left:114px;top:530px;width:1px;height:29px;background:#cdbd86;"></div><div style="position:absolute;left:317px;top:530px;width:1px;height:29px;background:#cdbd86;"></div><div style="position:absolute;left:380px;top:530px;width:1px;height:29px;background:#cdbd86;"></div><div style="position:absolute;left:444px;top:530px;width:1px;height:29px;background:#cdbd86;"></div><div style="position:absolute;left:528px;top:530px;width:1px;height:29px;background:#cdbd86;"></div><div style="position:absolute;left:616px;top:530px;width:1px;height:29px;background:#cdbd86;"></div><div style="position:absolute;left:689px;top:530px;width:1px;height:29px;background:#cdbd86;"></div><div style="position:absolute;left:790px;top:530px;width:1px;height:29px;background:#cdbd86;"></div><div style="position:absolute;left:875px;top:530px;width:1px;height:29px;background:#cdbd86;"></div><div style="position:absolute;left:961px;top:530px;width:1px;height:29px;background:#cdbd86;"></div><div class="t" style="left:77px;top:546.69px;font-size:11px;line-height:11px;color:#000;font-weight:normal;">1.4</div><div class="t" style="left:117px;top:532.69px;font-size:11px;line-height:11px;color:#000;font-weight:normal;letter-spacing:0.32px;">Устройство временных бытовых</div><div class="t" style="left:117px;top:546.69px;font-size:11px;line-height:11px;color:#000;font-weight:normal;">помещений</div><div class="t" style="right:584px;top:532.69px;font-size:11px;line-height:11px;color:#000;font-weight:normal;">5,000</div><div class="t" style="left:112px;width:600px;text-align:center;top:532.69px;font-size:11px;line-height:11px;color:#000;font-weight:normal;">шт</div><div style="position:absolute;left:74px;top:560px;width:888px;height:28px;background:#fff;"></div><div style="position:absolute;left:74px;top:559px;width:888px;height:1px;background:#cdbd86;"></div><div style="position:absolute;left:690px;top:560px;width:100px;height:28px;background:#007f00;"></div><div style="position:absolute;left:317px;top:559px;width:1px;height:29px;background:#cdbd86;"></div><div style="position:absolute;left:380px;top:559px;width:1px;height:29px;background:#cdbd86;"></div><div style="position:absolute;left:444px;top:559px;width:1px;height:29px;background:#cdbd86;"></div><div style="position:absolute;left:528px;top:559px;width:1px;height:29px;background:#cdbd86;"></div><div style="position:absolute;left:616px;top:559px;width:1px;height:29px;background:#cdbd86;"></div><div style="position:absolute;left:689px;top:559px;width:1px;height:29px;background:#cdbd86;"></div><div style="position:absolute;left:790px;top:559px;width:1px;height:29px;background:#cdbd86;"></div><div style="position:absolute;left:875px;top:559px;width:1px;height:29px;background:#cdbd86;"></div><div style="position:absolute;left:961px;top:559px;width:1px;height:29px;background:#cdbd86;"></div><div class="t" style="left:173px;top:561.69px;font-size:11px;line-height:11px;color:#000;font-weight:normal;letter-spacing:0.08px;">Рабочий строитель</div><div class="t" style="left:173px;top:575.69px;font-size:11px;line-height:11px;color:#000;font-weight:normal;">среднего разряда</div><div class="t" style="right:584px;top:561.69px;font-size:11px;line-height:11px;color:#000;font-weight:normal;">2,000</div><div class="t" style="right:436px;top:561.69px;font-size:11px;line-height:11px;color:#000;font-weight:normal;">16,000</div><div class="t" style="right:275px;top:561.69px;font-size:11px;line-height:11px;color:#000;font-weight:normal;">16,000</div><div class="t" style="right:174px;top:561.69px;font-size:11px;line-height:11px;color:#000;font-weight:normal;">100,000</div><div style="position:absolute;left:74px;top:589px;width:888px;height:14px;background:#fff;"></div><div style="position:absolute;left:74px;top:588px;width:888px;height:1px;background:#cdbd86;"></div><div style="position:absolute;left:690px;top:589px;width:100px;height:14px;background:#007f00;"></div><div style="position:absolute;left:317px;top:588px;width:1px;height:15px;background:#cdbd86;"></div><div style="position:absolute;left:380px;top:588px;width:1px;height:15px;background:#cdbd86;"></div><div style="position:absolute;left:444px;top:588px;width:1px;height:15px;background:#cdbd86;"></div><div style="position:absolute;left:528px;top:588px;width:1px;height:15px;background:#cdbd86;"></div><div style="position:absolute;left:616px;top:588px;width:1px;height:15px;background:#cdbd86;"></div><div style="position:absolute;left:689px;top:588px;width:1px;height:15px;background:#cdbd86;"></div><div style="position:absolute;left:790px;top:588px;width:1px;height:15px;background:#cdbd86;"></div><div style="position:absolute;left:875px;top:588px;width:1px;height:15px;background:#cdbd86;"></div><div style="position:absolute;left:961px;top:588px;width:1px;height:15px;background:#cdbd86;"></div><div class="t" style="left:173px;top:590.69px;font-size:11px;line-height:11px;color:#000;font-weight:normal;">Разнорабочий</div><div class="t" style="right:584px;top:590.69px;font-size:11px;line-height:11px;color:#000;font-weight:normal;">5,000</div><div class="t" style="right:436px;top:590.69px;font-size:11px;line-height:11px;color:#000;font-weight:normal;">40,000</div><div class="t" style="right:275px;top:590.69px;font-size:11px;line-height:11px;color:#000;font-weight:normal;">40,000</div><div class="t" style="right:174px;top:590.69px;font-size:11px;line-height:11px;color:#000;font-weight:normal;">100,000</div><div style="position:absolute;left:74px;top:604px;width:888px;height:29px;background:#fbf8ec;"></div><div style="position:absolute;left:74px;top:603px;width:888px;height:1px;background:#cdbd86;"></div><div style="position:absolute;left:114px;top:603px;width:1px;height:30px;background:#cdbd86;"></div><div style="position:absolute;left:317px;top:603px;width:1px;height:30px;background:#cdbd86;"></div><div style="position:absolute;left:380px;top:603px;width:1px;height:30px;background:#cdbd86;"></div><div style="position:absolute;left:444px;top:603px;width:1px;height:30px;background:#cdbd86;"></div><div style="position:absolute;left:528px;top:603px;width:1px;height:30px;background:#cdbd86;"></div><div style="position:absolute;left:616px;top:603px;width:1px;height:30px;background:#cdbd86;"></div><div style="position:absolute;left:689px;top:603px;width:1px;height:30px;background:#cdbd86;"></div><div style="position:absolute;left:790px;top:603px;width:1px;height:30px;background:#cdbd86;"></div><div style="position:absolute;left:875px;top:603px;width:1px;height:30px;background:#cdbd86;"></div><div style="position:absolute;left:961px;top:603px;width:1px;height:30px;background:#cdbd86;"></div><div class="t" style="left:77px;top:619.69px;font-size:11px;line-height:11px;color:#000;font-weight:normal;">1.5</div><div class="t" style="left:117px;top:605.69px;font-size:11px;line-height:11px;color:#000;font-weight:normal;">Устройство временных</div><div class="t" style="left:117px;top:619.69px;font-size:11px;line-height:11px;color:#000;font-weight:normal;">сооружений</div><div style="position:absolute;left:114px;top:232px;width:1px;height:32px;background:#cdbd86;"></div><div style="position:absolute;left:317px;top:232px;width:1px;height:32px;background:#cdbd86;"></div><div style="position:absolute;left:380px;top:232px;width:1px;height:32px;background:#cdbd86;"></div><div style="position:absolute;left:444px;top:232px;width:1px;height:32px;background:#cdbd86;"></div><div style="position:absolute;left:528px;top:232px;width:1px;height:32px;background:#cdbd86;"></div><div style="position:absolute;left:616px;top:232px;width:1px;height:32px;background:#cdbd86;"></div><div style="position:absolute;left:689px;top:232px;width:1px;height:32px;background:#cdbd86;"></div><div style="position:absolute;left:790px;top:232px;width:1px;height:32px;background:#cdbd86;"></div><div style="position:absolute;left:875px;top:232px;width:1px;height:32px;background:#cdbd86;"></div><div style="position:absolute;left:961px;top:232px;width:1px;height:32px;background:#cdbd86;"></div><div style="position:absolute;left:74px;top:232px;width:888px;height:32px;overflow:hidden"><div style="position:absolute;left:-74px;top:-232px;width:962px;height:607px"><div class="t" style="left:-206px;width:600px;text-align:center;top:234.0px;font-size:13px;line-height:13px;color:#000;font-weight:normal;">СДР</div><div class="t" style="left:-84px;width:600px;text-align:center;top:226.0px;font-size:13px;line-height:13px;color:#000;font-weight:normal;">Этап/Работа/Ресурс</div><div class="t" style="left:49px;width:600px;text-align:center;top:219.0px;font-size:13px;line-height:13px;color:#000;font-weight:normal;">Количест</div><div class="t" style="left:49px;width:600px;text-align:center;top:234.0px;font-size:13px;line-height:13px;color:#000;font-weight:normal;">во</div><div class="t" style="left:112px;width:600px;text-align:center;top:226.0px;font-size:13px;line-height:13px;color:#000;font-weight:normal;">измерен</div><div class="t" style="left:112px;width:600px;text-align:center;top:242.0px;font-size:13px;line-height:13px;color:#000;font-weight:normal;">ия</div><div class="t" style="left:186px;width:600px;text-align:center;top:226.0px;font-size:13px;line-height:13px;color:#000;font-weight:normal;">Трудоемкост</div><div class="t" style="left:186px;width:600px;text-align:center;top:242.0px;font-size:13px;line-height:13px;color:#000;font-weight:normal;">ь план</div><div class="t" style="left:272px;width:600px;text-align:center;top:226.0px;font-size:13px;line-height:13px;color:#000;font-weight:normal;">Трудоемкост</div><div class="t" style="left:272px;width:600px;text-align:center;top:242.0px;font-size:13px;line-height:13px;color:#000;font-weight:normal;">ь факт</div><div class="t" style="left:353px;width:600px;text-align:center;top:235.0px;font-size:13px;line-height:13px;color:#000;font-weight:normal;">отклонени</div><div class="t" style="left:353px;width:600px;text-align:center;top:251.0px;font-size:13px;line-height:13px;color:#000;font-weight:normal;">я</div><div class="t" style="left:440px;width:600px;text-align:center;top:234.0px;font-size:13px;line-height:13px;color:#000;font-weight:normal;">отклонения, %</div><div class="t" style="left:533px;width:600px;text-align:center;top:242.0px;font-size:13px;line-height:13px;color:#000;font-weight:normal;">Должность</div><div class="t" style="left:618px;width:600px;text-align:center;top:234.0px;font-size:13px;line-height:13px;color:#000;font-weight:normal;">Трудоемкост</div><div class="t" style="left:618px;width:600px;text-align:center;top:250.0px;font-size:13px;line-height:13px;color:#000;font-weight:normal;">ь план</div></div></div><div style="position:absolute;left:14px;top:278px;width:1px;height:329px;background:#a0a0a0;"></div><div style="position:absolute;left:27px;top:293px;width:1px;height:120px;background:#a0a0a0;"></div><div style="position:absolute;left:27px;top:413px;width:46px;height:1px;background:#a0a0a0;"></div><div style="position:absolute;left:40px;top:308px;width:1px;height:31px;background:#a0a0a0;"></div><div style="position:absolute;left:40px;top:339px;width:33px;height:1px;background:#a0a0a0;"></div><div style="position:absolute;left:53px;top:323px;width:1px;height:16px;background:#a0a0a0;"></div><div style="position:absolute;left:40px;top:353px;width:1px;height:60px;background:#a0a0a0;"></div><div style="position:absolute;left:53px;top:375px;width:1px;height:38px;background:#a0a0a0;"></div><div style="position:absolute;left:27px;top:427px;width:1px;height:30px;background:#a0a0a0;"></div><div style="position:absolute;left:27px;top:457px;width:46px;height:1px;background:#a0a0a0;"></div><div style="position:absolute;left:27px;top:478px;width:1px;height:52px;background:#a0a0a0;"></div><div style="position:absolute;left:27px;top:530px;width:46px;height:1px;background:#a0a0a0;"></div><div style="position:absolute;left:27px;top:551px;width:1px;height:52px;background:#a0a0a0;"></div><div style="position:absolute;left:27px;top:603px;width:46px;height:1px;background:#a0a0a0;"></div><div style="position:absolute;left:9px;top:267px;width:9px;height:9px;border:1px solid #a0a0a0;border-radius:1px;background:#fff;"></div><div style="position:absolute;left:11px;top:272px;width:7px;height:1px;background:#222;"></div><div style="position:absolute;left:22px;top:282px;width:9px;height:9px;border:1px solid #a0a0a0;border-radius:1px;background:#fff;"></div><div style="position:absolute;left:24px;top:287px;width:7px;height:1px;background:#222;"></div><div style="position:absolute;left:35px;top:297px;width:9px;height:9px;border:1px solid #a0a0a0;border-radius:1px;background:#fff;"></div><div style="position:absolute;left:37px;top:302px;width:7px;height:1px;background:#222;"></div><div style="position:absolute;left:48px;top:312px;width:9px;height:9px;border:1px solid #a0a0a0;border-radius:1px;background:#fff;"></div><div style="position:absolute;left:50px;top:317px;width:7px;height:1px;background:#222;"></div><div style="position:absolute;left:35px;top:342px;width:9px;height:9px;border:1px solid #a0a0a0;border-radius:1px;background:#fff;"></div><div style="position:absolute;left:37px;top:347px;width:7px;height:1px;background:#222;"></div><div style="position:absolute;left:48px;top:364px;width:9px;height:9px;border:1px solid #a0a0a0;border-radius:1px;background:#fff;"></div><div style="position:absolute;left:50px;top:369px;width:7px;height:1px;background:#222;"></div><div style="position:absolute;left:22px;top:416px;width:9px;height:9px;border:1px solid #a0a0a0;border-radius:1px;background:#fff;"></div><div style="position:absolute;left:24px;top:421px;width:7px;height:1px;background:#222;"></div><div style="position:absolute;left:22px;top:467px;width:9px;height:9px;border:1px solid #a0a0a0;border-radius:1px;background:#fff;"></div><div style="position:absolute;left:24px;top:472px;width:7px;height:1px;background:#222;"></div><div style="position:absolute;left:22px;top:540px;width:9px;height:9px;border:1px solid #a0a0a0;border-radius:1px;background:#fff;"></div><div style="position:absolute;left:24px;top:545px;width:7px;height:1px;background:#222;"></div><div style="position:absolute;left:958px;top:291px;width:4px;height:22px;border:2px solid #fcbd00;border-right:none;box-sizing:border-box;"></div>
</body></html>
